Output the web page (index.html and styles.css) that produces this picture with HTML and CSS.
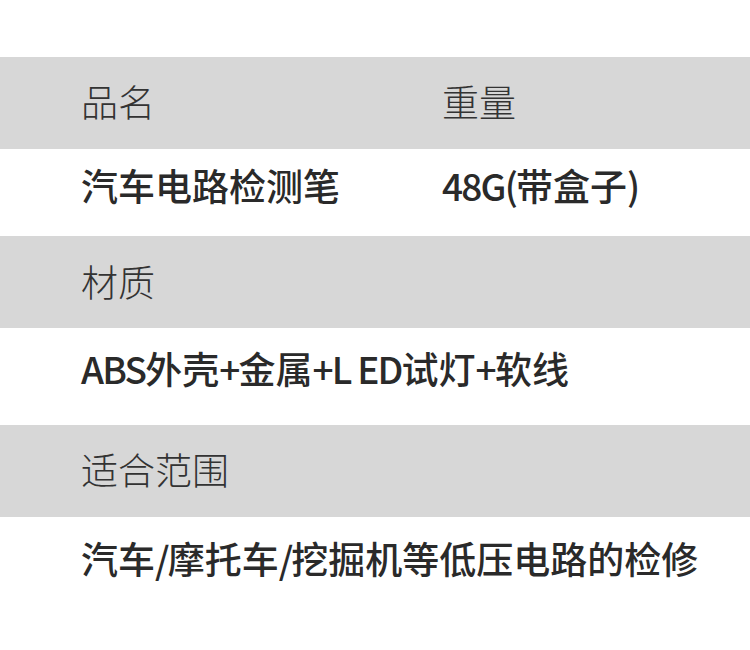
FILE: index.html
```html
<!DOCTYPE html>
<html lang="zh-CN">
<head>
<meta charset="utf-8">
<link rel="stylesheet" href="styles.css">
</head>
<body>
<div class="sheet">
  <div class="row head r1"><span class="c1">品名</span><span class="c2">重量</span></div>
  <div class="row body r2"><span class="c1">汽车电路检测笔</span><span class="c2"><span class="lat">48G(</span>带盒子<span class="lat">)</span></span></div>
  <div class="row head r3"><span class="c1">材质</span></div>
  <div class="row body r4"><span class="c1"><span class="lat">ABS</span>外壳<span class="lat">+</span>金属<span class="lat">+L ED</span>试灯<span class="lat">+</span>软线</span></div>
  <div class="row head r5"><span class="c1">适合范围</span></div>
  <div class="row body r6"><span class="c1">汽车<span class="lat">/</span>摩托车<span class="lat">/</span>挖掘机等低压电路的检修</span></div>
</div>
</body>
</html>
```
FILE: styles.css
```css
html, body {
  margin: 0;
  padding: 0;
  background: #ffffff;
}
body {
  width: 750px;
  height: 650px;
  overflow: hidden;
  font-family: "Noto Sans CJK SC", "Noto Sans", sans-serif;
}
.sheet {
  padding-top: 57px;
}
.row {
  display: flex;
  align-items: center;
  box-sizing: border-box;
  padding-left: 81px;
  font-size: 37px;
  line-height: 40px;
  white-space: nowrap;
}
.head {
  background: #d7d7d7;
  color: #333333;
  font-weight: 300;
  height: 92px;
}
.body {
  background: #ffffff;
  color: #2a2a2a;
  font-weight: 500;
}
.lat {
  letter-spacing: -1.8px;
}
.c1 {
  width: 361px;
  flex: none;
}
.r1 { padding-bottom: 5px; }
.r2 { height: 87px; padding-bottom: 15px; }
.r3 { padding-bottom: 3px; }
.r4 { height: 97px; padding-bottom: 17px; }
.r5 { padding-bottom: 4px; }
.r6 { height: 87px; padding-bottom: 5px; }
```
